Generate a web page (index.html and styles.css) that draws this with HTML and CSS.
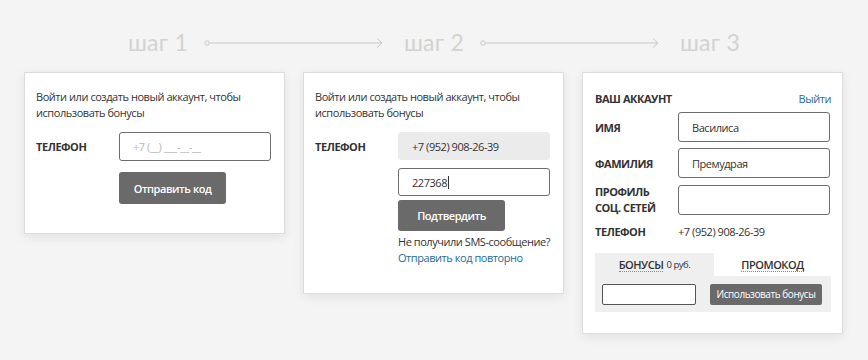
FILE: index.html
```html
<!DOCTYPE html>
<html lang="ru">
<head>
<meta charset="utf-8">
<link rel="stylesheet" href="styles.css">
</head>
<body>
<div class="page">
  <div class="steps">
    <span class="step">шаг 1</span>
    <svg class="arrow" width="180" height="12" viewBox="0 0 180 12"><circle cx="3" cy="6" r="2.2" fill="none" stroke="#c8c8c8" stroke-width="1"/><line x1="5.5" y1="6" x2="178" y2="6" stroke="#c8c8c8" stroke-width="1"/><polyline points="173,1.5 178,6 173,10.5" fill="none" stroke="#c8c8c8" stroke-width="1"/></svg>
    <span class="step">шаг 2</span>
    <svg class="arrow" width="180" height="12" viewBox="0 0 180 12"><circle cx="3" cy="6" r="2.2" fill="none" stroke="#c8c8c8" stroke-width="1"/><line x1="5.5" y1="6" x2="178" y2="6" stroke="#c8c8c8" stroke-width="1"/><polyline points="173,1.5 178,6 173,10.5" fill="none" stroke="#c8c8c8" stroke-width="1"/></svg>
    <span class="step">шаг 3</span>
  </div>
  <div class="cards">
    <div class="card card1">
      <p class="intro">Войти или создать новый аккаунт, чтобы использовать бонусы</p>
      <div class="row">
        <span class="label">ТЕЛЕФОН</span>
        <div class="field placeholder">+7 (__) ___-__-__</div>
      </div>
      <div class="indent"><button class="btn btn-send">Отправить код</button></div>
    </div>
    <div class="card card2">
      <p class="intro">Войти или создать новый аккаунт, чтобы использовать бонусы</p>
      <div class="row">
        <span class="label">ТЕЛЕФОН</span>
        <div class="field filled">+7 (952) 908-26-39</div>
      </div>
      <div class="indent stack">
        <div class="field code">227368<span class="caret"></span></div>
        <button class="btn btn-confirm">Подтвердить</button>
        <p class="note">Не получили SMS-сообщение?<br><a class="link">Отправить код повторно</a></p>
      </div>
    </div>
    <div class="card card3">
      <div class="head"><span class="label">ВАШ АККАУНТ</span><a class="link">Выйти</a></div>
      <div class="row3"><span class="label">ИМЯ</span><div class="field f3">Василиса</div></div>
      <div class="row3"><span class="label">ФАМИЛИЯ</span><div class="field f3">Премудрая</div></div>
      <div class="row3"><span class="label two">ПРОФИЛЬ<br>СОЦ. СЕТЕЙ</span><div class="field f3"></div></div>
      <div class="row3 phone"><span class="label">ТЕЛЕФОН</span><span class="value">+7 (952) 908-26-39</span></div>
      <div class="tabs">
        <div class="tab active"><span class="dotted">БОНУСЫ</span> <small>0 руб.</small></div>
        <div class="tab"><span class="dotted">ПРОМОКОД</span></div>
      </div>
      <div class="panel">
        <div class="mini-input"></div>
        <button class="btn btn-use">Использовать бонусы</button>
      </div>
    </div>
  </div>
</div>
</body>
</html>
```

FILE: styles.css
```css
* { box-sizing: border-box; }
html, body { margin: 0; padding: 0; }
body {
  background: #f4f4f4;
  font-family: "Open Sans", "Noto Sans", sans-serif;
  font-size: 11px;
  letter-spacing: -0.45px;
  color: #333;
  width: 868px;
  height: 360px;
  overflow: hidden;
}
.page { padding-top: 26px; }
.steps {
  display: flex;
  align-items: center;
  gap: 20px;
  padding-left: 128px;
  height: 32px;
}
.step {
  font-family: "Lato", "Open Sans", sans-serif;
  font-weight: 400;
  font-size: 23px;
  letter-spacing: 0.2px;
  color: #d2d2d2;
  width: 56px;
  white-space: nowrap;
}
.arrow { display: block; margin-top: 2px; }
.cards {
  display: flex;
  align-items: flex-start;
  gap: 18px;
  padding-left: 24px;
  margin-top: 14px;
}
.card {
  width: 261px;
  background: #fff;
  border: 1px solid #dcdcdc;
  box-shadow: 0 3px 10px rgba(0,0,0,0.08);
  padding: 16px 12px 29px 11px;
}
.intro {
  margin: 0;
  line-height: 16px;
  color: #333;
}
.row {
  display: flex;
  align-items: center;
  margin-top: 11px;
}
.label {
  font-weight: 700;
  color: #333;
  width: 83px;
  flex: none;
}
.field {
  width: 152px;
  height: 29px;
  border: 1px solid #6d6d6d;
  border-radius: 3px;
  padding-left: 13px;
  display: flex;
  align-items: center;
  color: #333;
  background: #fff;
}
.placeholder { color: #b8b8b8; }
.filled { background: #ebebeb; border-color: #ebebeb; height: 28px; }
.indent { padding-left: 83px; }
.btn {
  font-family: "Open Sans", "Noto Sans", sans-serif;
  letter-spacing: -0.45px;
  border: none;
  border-radius: 3px;
  background: #6a6a6a;
  color: #fff;
  font-weight: 600;
  font-size: 11px;
  cursor: pointer;
  padding: 0;
}
.btn-send { width: 107px; height: 32px; margin-top: 11px; }
.card2 { padding-bottom: 27px; }
.stack { display: flex; flex-direction: column; align-items: flex-start; }
.code { margin-top: 8px; height: 28px; }
.caret { display: inline-block; width: 1px; height: 13px; background: #333; margin-left: 1px; }
.btn-confirm { width: 107px; height: 31px; margin-top: 4px; }
.note { margin: 3px 0 0; line-height: 16px; color: #333; }
.link { color: #1f6b9c; }
.card3 { padding: 16px 11px 21px 12px; }
.head { display: flex; justify-content: space-between; align-items: center; height: 18px; }
.head .label { width: auto; }
.row3 { display: flex; align-items: center; margin-top: 6px; }
.head + .row3 { margin-top: 5px; }
.f3 { height: 30px; padding-left: 13px; }
.two { line-height: 16px; }
.phone { margin-top: 6px; height: 18px; }
.value { color: #333; }
.tabs { display: flex; margin-top: 13px; }
.tab {
  height: 23px;
  display: flex;
  align-items: center;
  justify-content: center;
  font-weight: 600;
  color: #333;
}
.tab.active { background: #efefef; width: 119px; }
.tab:not(.active) { flex: 1; }
.dotted { border-bottom: 1px dotted #888; line-height: 13px; }
.tab small { font-weight: 400; font-size: 9.5px; margin-left: 3px; }
.panel {
  background: #efefef;
  height: 36px;
  display: flex;
  align-items: center;
  padding-left: 7px;
  gap: 14px;
}
.mini-input {
  width: 94px;
  height: 21px;
  background: #fff;
  border: 1px solid #555;
  border-radius: 2px;
}
.btn-use { width: 112px; height: 21px; font-size: 10px; font-weight: 400; border-radius: 2px; }
```
